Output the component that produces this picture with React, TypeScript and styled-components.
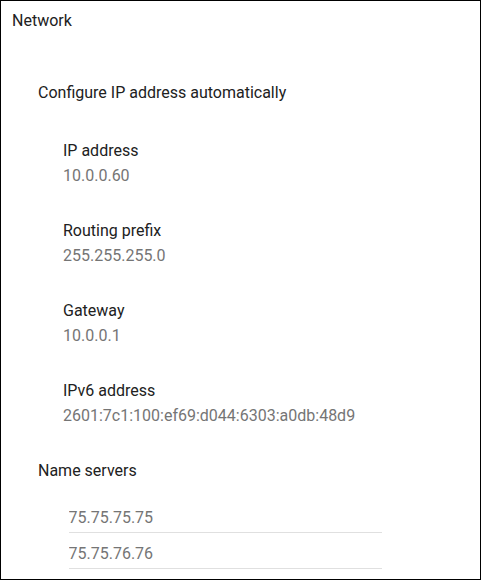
import React from "react";
import styled, { createGlobalStyle } from "styled-components";

const Global = createGlobalStyle`
  html, body { margin: 0; padding: 0; background: #fff; }
  body { font-family: Roboto, "Noto Sans", Arial, sans-serif; }
`;

const Panel = styled.div`
  box-sizing: border-box;
  width: 481px;
  height: 580px;
  border: 1px solid #000;
  background: #fff;
  padding: 9.5px 0 0 11px;
  overflow: hidden;
`;

const Title = styled.div`
  font-size: 16px;
  line-height: 20px;
  color: #212121;
`;

const Section = styled.div<{ $top: number }>`
  margin-top: ${(p) => p.$top}px;
  padding-left: 26px;
`;

const SectionTitle = styled.div`
  font-size: 16px;
  line-height: 20px;
  color: #212121;
`;

const Fields = styled.div`
  display: flex;
  flex-direction: column;
  gap: 35px;
  padding-left: 25px;
  margin-top: 38px;
`;

const Field = styled.div`
  display: flex;
  flex-direction: column;
  gap: 5px;
`;

const Label = styled.div`
  font-size: 16px;
  line-height: 20px;
  color: #212121;
`;

const Value = styled.div`
  font-size: 16px;
  line-height: 20px;
  color: #757575;
`;

const Servers = styled.div`
  display: flex;
  flex-direction: column;
  gap: 6px;
  padding-left: 30.5px;
  margin-top: 21.5px;
`;

const ServerInput = styled.input`
  box-sizing: border-box;
  width: 313px;
  height: 30px;
  padding: 4.5px 0 4.5px 0;
  margin: 0;
  border: none;
  border-bottom: 1px solid #e0e0e0;
  outline: none;
  background: transparent;
  font-family: Roboto, "Noto Sans", Arial, sans-serif;
  font-size: 16px;
  line-height: 20px;
  color: #757575;
`;

const fields = [
  { label: "IP address", value: "10.0.0.60" },
  { label: "Routing prefix", value: "255.255.255.0" },
  { label: "Gateway", value: "10.0.0.1" },
  { label: "IPv6 address", value: "2601:7c1:100:ef69:d044:6303:a0db:48d9" },
];

const servers = ["75.75.75.75", "75.75.76.76"];

export default function App() {
  return (
    <>
      <Global />
      <Panel>
        <Title>Network</Title>
        <Section $top={52.5}>
          <SectionTitle>Configure IP address automatically</SectionTitle>
          <Fields>
            {fields.map((f) => (
              <Field key={f.label}>
                <Label>{f.label}</Label>
                <Value>{f.value}</Value>
              </Field>
            ))}
          </Fields>
        </Section>
        <Section $top={35}>
          <SectionTitle>Name servers</SectionTitle>
          <Servers>
            {servers.map((s) => (
              <ServerInput key={s} defaultValue={s} readOnly />
            ))}
          </Servers>
        </Section>
      </Panel>
    </>
  );
}
